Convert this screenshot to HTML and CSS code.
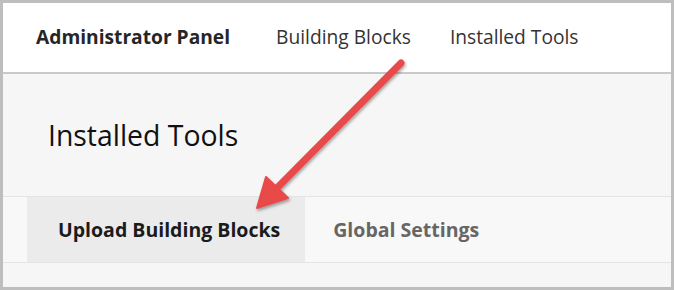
FILE: index.html
```html
<!DOCTYPE html>
<html lang="en">
<head>
	<meta charset="UTF-8">
	<title>Installed Tools</title>
	<link rel="stylesheet" href="styles.css">
</head>
<body>
	<div class="frame">
		<div class="topbar">
			<span class="brand">Administrator Panel</span>
			<a class="crumb first-crumb" href="#">Building Blocks</a>
			<a class="crumb" href="#">Installed Tools</a>
		</div>
		<div class="content">
			<h1 class="title">Installed Tools</h1>
			<div class="tabs">
				<span class="tab active">Upload Building Blocks</span>
				<span class="tab">Global Settings</span>
			</div>
		</div>
		<!-- arrow drawn over the page -->
		<svg class="arrow" width="674" height="290" viewBox="0 0 674 290">
			<defs>
				<filter id="shadow" x="-20%" y="-20%" width="140%" height="140%">
					<feDropShadow dx="1" dy="2" stdDeviation="1.5" flood-color="#000" flood-opacity="0.35"/>
				</filter>
			</defs>
			<g filter="url(#shadow)" fill="#e8484a" stroke="#e8484a">
				<line x1="401" y1="63" x2="275" y2="190" stroke-width="7" stroke-linecap="round"/>
				<polygon points="257,208 266,177 288,198" stroke-width="2" stroke-linejoin="round"/>
			</g>
		</svg>
	</div>
</body>
</html>
```

FILE: styles.css
```css
body {
	margin: 0;
	font-family: "Open Sans", "Liberation Sans", sans-serif;
}
.frame {/*outer gray frame*/
	position: relative;
	width: 674px;
	height: 290px;
	box-sizing: border-box;
	border: 3px solid #bebebe;
	background: #f6f6f6;
	overflow: hidden;
}
.topbar {
	display: flex;
	align-items: center;
	height: 71px;
	padding-left: 33px;
	padding-bottom: 3px;
	box-sizing: border-box;
	background: #fff;
	border-bottom: 2px solid #c9c9c9;
	font-size: 19.2px;
	color: #333;
}
.brand {
	font-weight: bold;
	color: #262626;
}
.crumb {
	color: #333;
	text-decoration: none;
	margin-left: 39px;
}
.first-crumb {
	margin-left: 46px;
}
.content {
	background: #f6f6f6;
}
.title {
	margin: 0;
	padding: 43px 0 0 45px;
	height: 80px;
	box-sizing: border-box;
	font-size: 28.4px;
	font-weight: normal;
	color: #111;
	line-height: 36px;
}
.tabs {/*tab row*/
	display: flex;
	margin-top: 42px;
	height: 67px;
	box-sizing: border-box;
	padding-left: 24px;
	background: #f8f8f8;
	border-top: 1px solid #e4e4e4;
	border-bottom: 1px solid #e4e4e4;
}
.tab {
	display: flex;
	align-items: center;
	padding: 0 28px 0 28px;
	font-size: 19.5px;
	font-weight: bold;
	color: #666;
}
.tab.active {
	background: #ebebeb;
	color: #1b1b1b;
	padding: 0 25px 0 31px;
}
.arrow {
	position: absolute;
	left: -3px;
	top: -3px;
}
```
